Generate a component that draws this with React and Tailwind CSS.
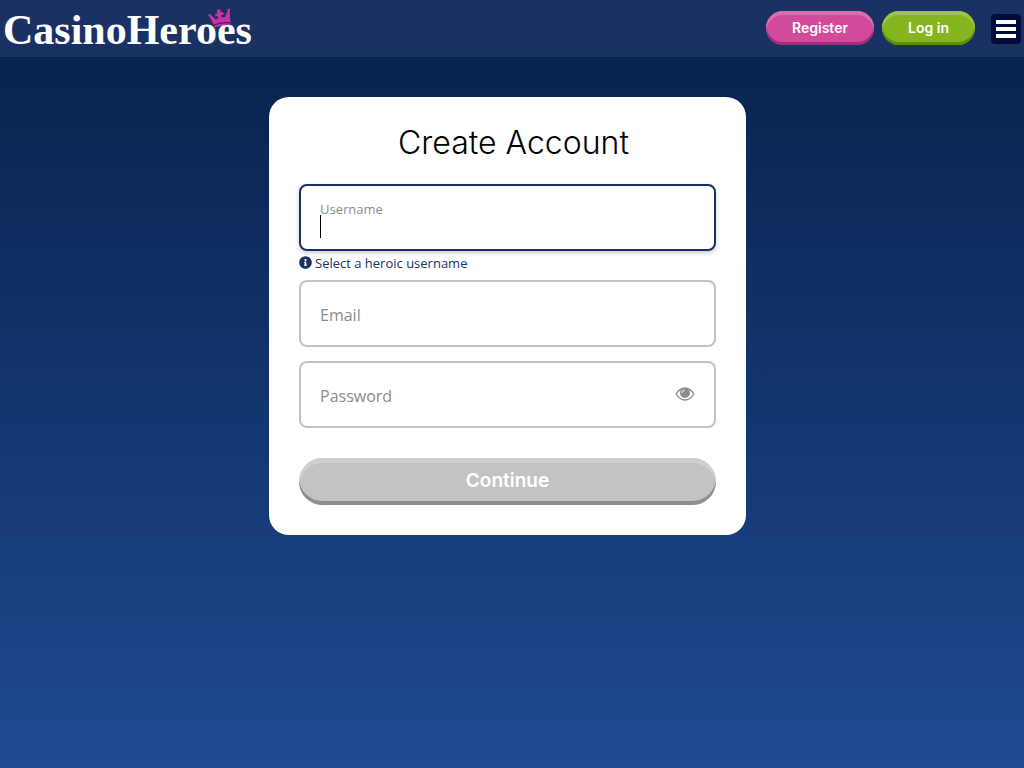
import React, { useState } from 'react';
import { FaInfoCircle } from 'react-icons/fa';

const Crown = () => (
  <svg viewBox="0 0 26 22" className="absolute right-[26px] top-2 w-[26px] h-[22px]" fill="#cb30a4" aria-hidden="true">
    <path d="M1 7.4 L2.4 6.6 L7.6 11.6 L10.4 10.2 L9.8 8 L7.6 8.6 L7 6 L9.4 5.4 L8.8 3 Q9.4 0.8 11.6 1.2 Q13.4 2 12.6 4.4 L15 4 L15.8 6.4 L13 7.2 L13.8 9.4 L17 9 L20 1.8 L21.6 2 L22.4 14.2 Q14 13.4 5.6 16.4 Z" />
    <path d="M6 17.6 Q14 14.8 22.6 15.4 L22.4 17.2 Q15 16.6 6.8 19.4 Z" />
    <circle cx="1.8" cy="7.2" r="1.3" />
    <circle cx="20.8" cy="2" r="1.3" />
  </svg>
);

const EyeIcon = () => (
  <svg viewBox="0 0 20 14" className="w-5 h-[14px]" aria-hidden="true">
    <path d="M1 7 Q5 1 10 1 Q15 1 19 7 Q15 13 10 13 Q5 13 1 7 Z" fill="none" stroke="#8c8c8c" strokeWidth="1.3" strokeLinejoin="round" />
    <circle cx="10" cy="6" r="5" fill="#8c8c8c" />
    <path d="M7 5.6 Q7.3 3.4 9.4 3" fill="none" stroke="#fff" strokeWidth="1" strokeLinecap="round" />
  </svg>
);

const Header = () => (
  <header className="flex items-center justify-between h-[57px] pl-[3px] pr-[3px] bg-[#1a3263]">
    <a href="#" className="relative block h-[57px] pr-2 font-['Liberation_Serif',serif] font-bold text-[42px] leading-[60px] text-white">
      CasinoHeroes
      <Crown />
    </a>
    <div className="flex items-center pb-px font-['Inter',sans-serif] font-semibold text-sm text-white">
      <button type="button" className="w-[108px] h-[34px] mr-2 rounded-full bg-[#d14b9b] shadow-[inset_0_4px_0_#da6fb0,inset_0_-3px_0_#a42c78]">Register</button>
      <button type="button" className="w-[93px] h-[34px] mr-4 rounded-full bg-[#85b51f] shadow-[inset_0_4px_0_#9dc34c,inset_0_-3px_0_#5c8c0a]">Log in</button>
      <button type="button" aria-label="Menu" className="flex flex-col items-center justify-center gap-[3px] w-[30px] h-[30px] mt-px rounded bg-[#020c3c]">
        <span className="w-5 h-1 bg-white"></span>
        <span className="w-5 h-1 bg-white"></span>
        <span className="w-5 h-1 bg-white"></span>
      </button>
    </div>
  </header>
);

const App = () => {
  const [form, setForm] = useState({ username: '', email: '', password: '' });
  const [active, setActive] = useState('username');
  const [showPassword, setShowPassword] = useState(false);

  const renderField = (name, label, type) => {
    const isActive = active === name;
    const floating = isActive || form[name] !== '';
    return (
      <div className="relative">
        <input
          id={name}
          type={type}
          value={form[name]}
          onFocus={() => setActive(name)}
          onChange={(e) => setForm({ ...form, [name]: e.target.value })}
          className={`block w-full h-[67px] px-[19px] pt-5 border-2 rounded-lg bg-white text-base text-black outline-none ${isActive ? 'border-[#1a3263] shadow-[0_2px_4px_#1a326340]' : 'border-[#c3c3c3]'} ${form[name] === '' ? 'caret-transparent' : 'caret-black'}`}
        />
        <label htmlFor={name} className={`absolute left-[21px] pointer-events-none text-[#8c8c8c] ${floating ? 'top-[15px] text-[13px] leading-5' : 'top-[23px] text-base leading-6'}`}>{label}</label>
        {isActive && form[name] === '' && <span className="absolute left-[21px] top-[31px] w-px h-[23px] bg-black pointer-events-none"></span>}
        {name === 'password' && (
          <button type="button" aria-label="Show password" onClick={() => setShowPassword(!showPassword)} className="absolute right-[21px] top-[26px]">
            <EyeIcon />
          </button>
        )}
      </div>
    );
  };

  return (
    <div className="flex flex-col min-h-screen bg-linear-to-b from-[#07204a] to-[#204a91] font-['Open_Sans',sans-serif]">
      <Header />
      <main className="pt-10 pb-10 pr-[9px]">
        <form onSubmit={(e) => e.preventDefault()} className="w-full max-w-[477px] mx-auto p-[30px] rounded-[20px] bg-white">
          <h1 className="mb-[25px] pl-3 text-center font-['Inter',sans-serif] font-light text-[32px] leading-8 text-black">Create Account</h1>
          {renderField('username', 'Username', 'text')}
          <p className="flex items-center gap-[3px] h-[29px] pb-[6px] text-[13px] leading-5 text-[#1a3263]">
            <FaInfoCircle className="w-[13px] h-[13px]" />Select a heroic username
          </p>
          {renderField('email', 'Email', 'email')}
          <div className="mt-[14px]">
            {renderField('password', 'Password', showPassword ? 'text' : 'password')}
          </div>
          <button type="submit" className="w-full h-[47px] mt-[30px] rounded-full bg-[#c3c3c3] shadow-[inset_0_5px_0_#cfcfcf,inset_0_-4px_0_#8f8f8f] font-['Inter',sans-serif] font-semibold text-[19px] text-white">Continue</button>
        </form>
      </main>
    </div>
  );
};

export default App;
